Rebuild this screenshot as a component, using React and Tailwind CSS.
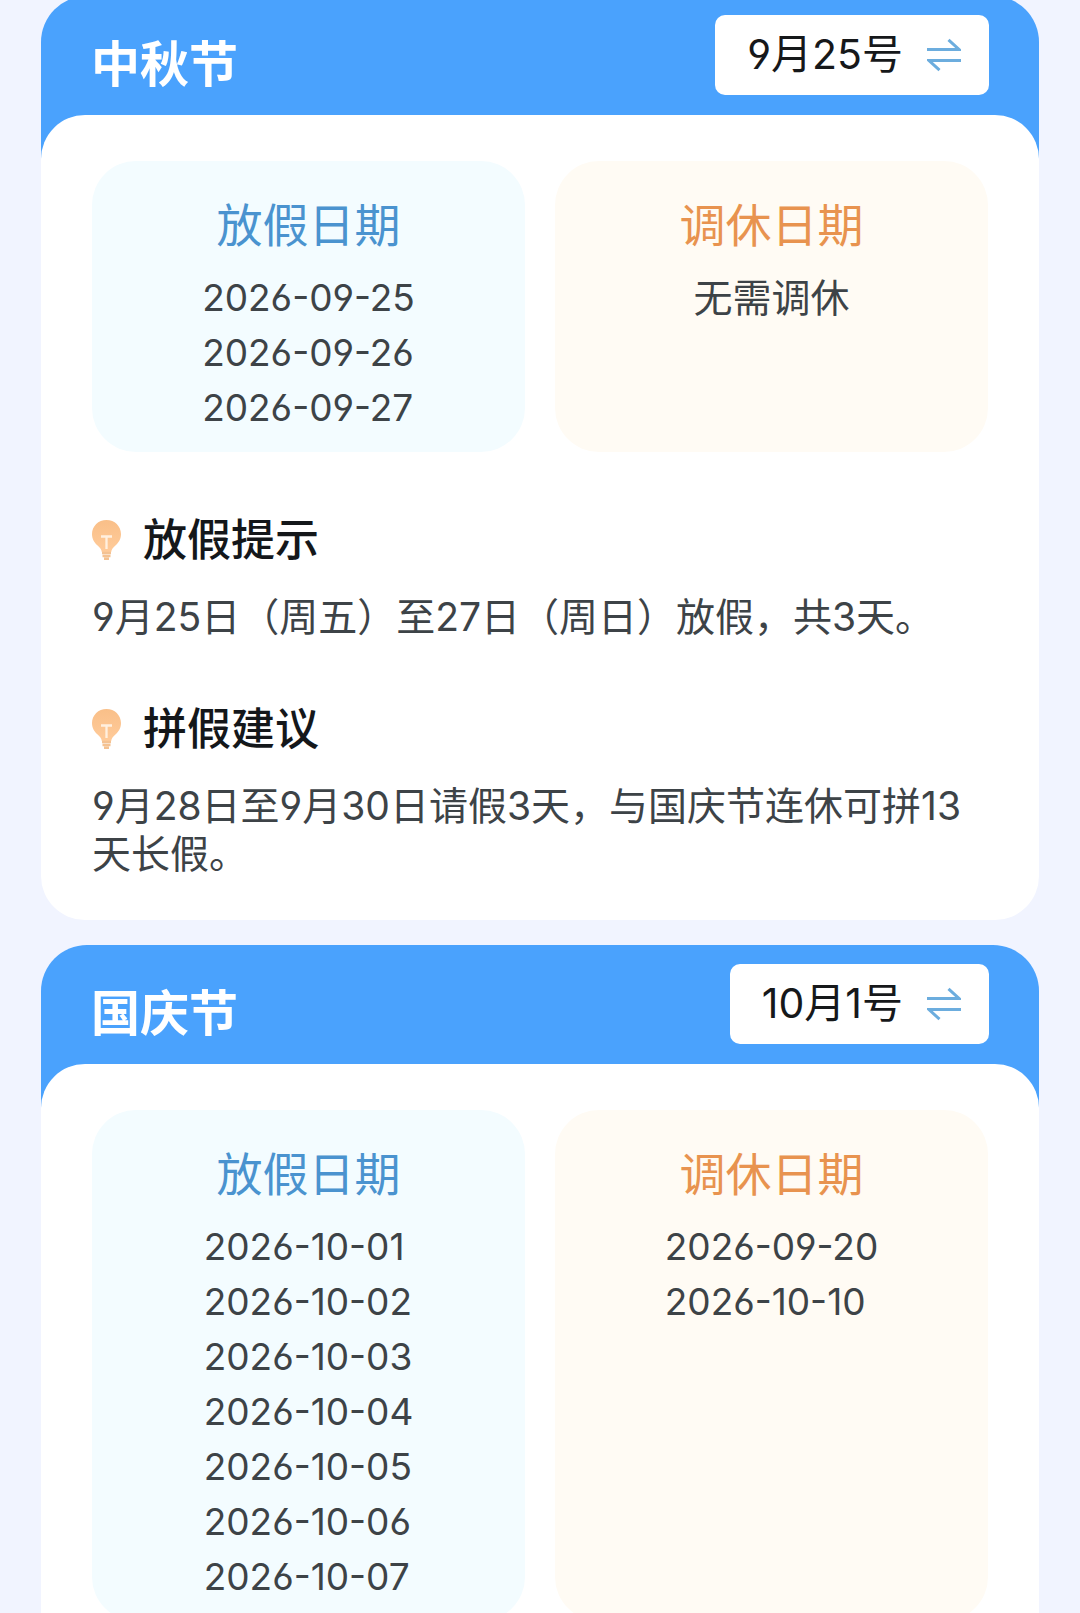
import React from 'react';

const holidays = [
    {
        name: '中秋节',
        day: '9月25号',
        off: ['2026-09-25', '2026-09-26', '2026-09-27'],
        work: [],
        tips: [
            { title: '放假提示', text: '9月25日（周五）至27日（周日）放假，共3天。' },
            { title: '拼假建议', text: '9月28日至9月30日请假3天，与国庆节连休可拼13天长假。' }
        ]
    },
    {
        name: '国庆节',
        day: '10月1号',
        off: ['2026-10-01', '2026-10-02', '2026-10-03', '2026-10-04', '2026-10-05', '2026-10-06', '2026-10-07'],
        work: ['2026-09-20', '2026-10-10'],
        tips: []
    }
];

const SwapIcon = () => (
    <svg viewBox="0 0 34 34" className="w-[34px] h-[34px]" fill="none" stroke="#6cadde" strokeWidth="3" aria-hidden="true">
        <path d="M0 11.500H32L21.500 1.800" />
        <path d="M34 22.500H2L12.500 32.200" />
    </svg>
);

const BulbIcon = () => (
    <svg viewBox="0 0 29 40" className="w-[29px] h-[40px] shrink-0" aria-hidden="true">
        <defs>
            <linearGradient id="bulb" x1="0" y1="0" x2="0" y2="1">
                <stop offset="0%" stopColor="#f9bf88" />
                <stop offset="100%" stopColor="#ffcb9a" />
            </linearGradient>
        </defs>
        <path d="M14.500 0C6.300 0 0 6.200 0 14C0 19 2.300 22.500 5.300 25.300C8 27.800 9.500 29.500 9.800 32H19.200C19.500 29.500 21 27.800 23.700 25.300C26.700 22.500 29 19 29 14C29 6.200 22.700 0 14.500 0Z" fill="url(#bulb)" />
        <path d="M9 16.500H20M14.500 16.500V29" fill="none" stroke="#fff0df" strokeWidth="2.300" />
        <path d="M10 33H19M10.500 36H18.500M12 38.800H17" stroke="#f4c292" strokeWidth="2.600" />
    </svg>
);

const DatePanel = ({ title, dates, panelClass, titleClass }) => (
    <div className={`flex-1 flex flex-col items-center rounded-[44px] pt-9 pb-[17px] ${panelClass}`}>
        <h3 className={`text-[46px] leading-[56px] ${titleClass}`}>{title}</h3>
        {dates.length > 0 ? (
            <ul className="mt-[17px] text-[37px] leading-[55px]">
                {dates.map((d) => <li key={d}>{d}</li>)}
            </ul>
        ) : (
            <p className="mt-[17px] text-[39px] leading-[55px]">无需调休</p>
        )}
    </div>
);

const HolidayCard = ({ holiday }) => (
    <section>
        <header className="flex items-start justify-between rounded-t-[46px] bg-[#4aa2fd] px-[50px] pt-[19px] pb-16">
            <h2 className="pt-5 text-[49px] leading-[60px] font-bold text-white">{holiday.name}</h2>
            <button type="button" className="flex items-center gap-6 h-20 rounded-[10px] bg-white pl-8 pr-7 text-[41px] text-[#16181a]">
                {holiday.day}
                <SwapIcon />
            </button>
        </header>
        {/* White sheet slides up over the blue header so its corners show through */}
        <div className="-mt-11 rounded-[44px] bg-white px-[51px] pt-[46px] pb-[42px]">
            <div className="flex gap-[30px]">
                <DatePanel title="放假日期" dates={holiday.off} panelClass="bg-[#f3fcff]" titleClass="text-[#4a93cf]" />
                <DatePanel title="调休日期" dates={holiday.work} panelClass="bg-[#fffbf4]" titleClass="text-[#e8934f]" />
            </div>
            {holiday.tips.map((tip) => (
                <div key={tip.title} className="mt-[60px]">
                    <div className="flex items-center gap-[22px]">
                        <BulbIcon />
                        <h3 className="text-[44px] leading-[56px] font-medium text-[#14171a]">{tip.title}</h3>
                    </div>
                    <p className="mt-[25px] text-[39px] leading-[48px]">{tip.text}</p>
                </div>
            ))}
        </div>
    </section>
);

const App = () => (
    <main
        lang="zh-CN"
        className="h-screen overflow-hidden bg-[#f1f4ff] px-[41px] text-[#3d4347] font-['Inter','Noto_Sans_CJK_SC',sans-serif] [font-feature-settings:'cv03','cv04']"
    >
        <div className="-mt-1 flex flex-col gap-[25px]">
            {holidays.map((h) => <HolidayCard key={h.name} holiday={h} />)}
        </div>
    </main>
);

export default App;
